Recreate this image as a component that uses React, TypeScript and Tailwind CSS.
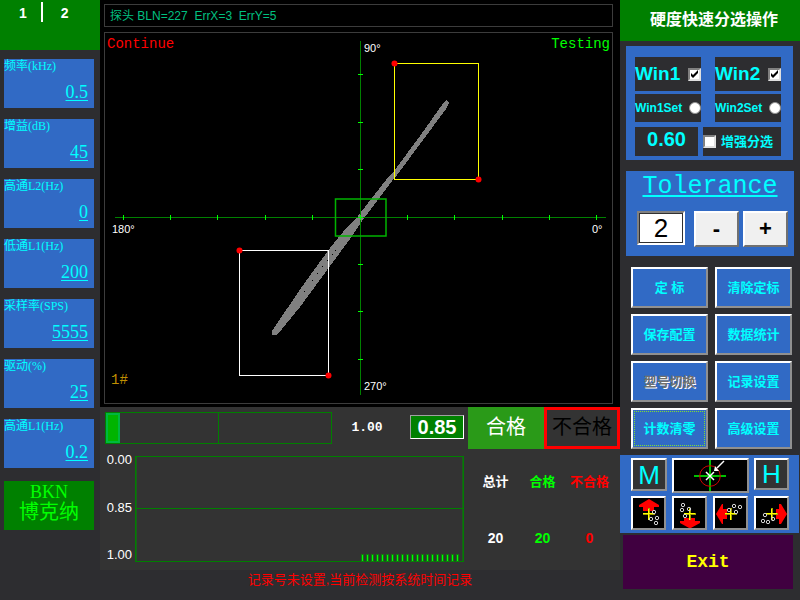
import { useState, type ReactNode } from "react";

const SANS = "font-['Liberation_Sans','Noto_Sans_CJK_SC',sans-serif]";
const SERIF = "font-['Liberation_Serif','Noto_Sans_CJK_SC',serif]";
const MONO = "font-['Liberation_Mono','Noto_Sans_CJK_SC',monospace]";
const BEVEL = "border-2 border-t-white border-l-white border-r-[#909090] border-b-[#909090]";

const parameters = [
  { id: "freq", label: "频率(kHz)", value: "0.5" },
  { id: "gain", label: "增益(dB)", value: "45" },
  { id: "high2", label: "高通L2(Hz)", value: "0" },
  { id: "low1", label: "低通L1(Hz)", value: "200" },
  { id: "rate", label: "采样率(SPS)", value: "5555" },
  { id: "drive", label: "驱动(%)", value: "25" },
  { id: "high1", label: "高通L1(Hz)", value: "0.2" },
];

function Sidebar() {
  return (
    <aside className="w-[100px] shrink-0">
      <nav className="flex h-[50px] items-start gap-[14px] bg-[#008000] pl-[19px] pt-0.5 text-sm font-bold text-white">
        <button className="h-[22px]">1</button>
        <span className="h-5 w-0.5 bg-white" />
        <button className="ml-1 h-[22px]">2</button>
      </nav>
      <div className="flex flex-col gap-[11px] pl-1 pr-1.5 pt-[9px]">
        {parameters.map((p) => (
          <div key={p.id} className={`h-[49px] bg-[#316ac5] text-[#00ffff] ${SERIF}`}>
            <div id={p.id} className="h-[22px] whitespace-nowrap text-xs leading-[14px]">
              {p.label}
            </div>
            <button
              aria-labelledby={p.id}
              className="block w-full pr-1.5 text-right text-lg leading-[22px] underline underline-offset-2"
            >
              {p.value}
            </button>
          </div>
        ))}
      </div>
      <div
        className={`ml-1 mr-1.5 mt-[13px] h-[49px] bg-[#008000] pt-0.5 text-center text-[#00ff00] ${SERIF}`}
      >
        <div className="text-lg leading-[18px]">BKN</div>
        <div className="text-xl leading-[22px]">博克纳</div>
      </div>
    </aside>
  );
}

const xTicks = [123, 170, 217, 265, 312, 360, 407, 454, 502, 549, 596];
const yTicks = [74, 122, 169, 217, 264, 311, 359];
const traceHoles = [
  [335, 250], [332, 254], [327, 260], [322, 266], [317, 273], [312, 280], [304, 291],
];

function ImpedancePlane() {
  return (
    <svg viewBox="105 33 507 370" className="block w-full" shapeRendering="crispEdges">
      <polygon
        fill="#808080"
        points="272,331 301,288 330,248 347,227 358,216 386,180 394,171 420,136 444,102 447,100 449,103 446,109 397,175 392,181 362,221 350,239 330,266 300,307 277,335 272,335"
      />
      {traceHoles.map(([x, y]) => (
        <rect key={x} x={x} y={y} width="1" height="1" fill="#000" />
      ))}
      <rect x="115" y="217" width="491" height="1" fill="#008000" />
      <rect x="360" y="41" width="1" height="354" fill="#008000" />
      {xTicks.map((x) => (
        <rect key={x} x={x} y="215" width="1" height="5" fill="#00ff00" />
      ))}
      {yTicks.map((y) => (
        <rect key={y} x="358" y={y} width="5" height="1" fill="#00ff00" />
      ))}
      <rect x="335.5" y="199" width="50.5" height="37" fill="none" stroke="#00b400" strokeWidth="1.5" shapeRendering="auto" />
      <rect x="394.5" y="63.5" width="84" height="116" fill="none" stroke="#ffff00" />
      <rect x="239.5" y="250.5" width="89" height="125" fill="none" stroke="#fff" />
      <g fill="#f00" shapeRendering="auto">
        <circle cx="394.5" cy="63.5" r="3" />
        <circle cx="478.5" cy="179.5" r="3" />
        <circle cx="239.5" cy="250.5" r="3" />
        <circle cx="328.5" cy="375.5" r="3" />
      </g>
      <g className={`text-[11px] ${SANS}`} fill="#fff">
        <text x="364" y="52">90°</text>
        <text x="112" y="233">180°</text>
        <text x="592" y="233">0°</text>
        <text x="364" y="390">270°</text>
      </g>
      <g className={`text-sm ${MONO}`}>
        <text x="107" y="48" fill="#f00">Continue</text>
        <text x="610" y="48" fill="#00ff00" textAnchor="end">Testing</text>
        <text x="111" y="384" fill="#c09000">1#</text>
      </g>
    </svg>
  );
}

function HistoryChart() {
  return (
    <div className="flex min-w-0 flex-1">
      <div className="-mt-0.5 flex h-[111px] w-[35px] flex-col justify-between pr-[3px] text-right text-[13px] leading-4 text-white">
        <span>0.00</span>
        <span>0.85</span>
        <span>1.00</span>
      </div>
      <svg viewBox="0 0 330 106" className="mt-0.5 block h-[106px] min-w-0 flex-1" shapeRendering="crispEdges">
        <rect x="0.5" y="0.5" width="329" height="105" fill="none" stroke="#008000" />
        <rect x="1" y="1" width="1" height="104" fill="#1a5e1a" />
        <rect x="328" y="1" width="1" height="104" fill="#1a5e1a" />
        <rect x="1" y="52" width="328" height="1" fill="#008000" />
        {Array.from({ length: 20 }, (_, i) => (
          <g key={i}>
            <rect x={227 + i * 5} y="98" width="3" height="8" fill="#107a10" />
            <rect x={228 + i * 5} y="99" width="1" height="6" fill="#00ff00" />
          </g>
        ))}
      </svg>
    </div>
  );
}

function Results() {
  return (
    <section className="h-[163px] bg-[#333333]">
      <div className="flex h-[42px]">
        <div className="ml-[5px] mt-[5px] flex h-8 min-w-0 flex-1 border border-[#008000]">
          <div className="flex-1 border-r border-[#008000]">
            <div className="h-[30px] w-[14px] border-2 border-[#00b840] bg-[#00b400]" />
          </div>
          <div className="flex-1" />
        </div>
        <span className={`w-[70px] pt-0.5 text-center text-[13px] font-bold leading-[38px] text-white ${MONO}`}>
          1.00
        </span>
        <output className="ml-2 mr-1 mt-2 h-6 w-[54px] border border-white border-l-[#a0a0a0] border-t-[#a0a0a0] bg-[#008000] text-center text-xl font-bold leading-[22px] text-white">
          0.85
        </output>
        <div className="w-[76px] bg-[#2a9a18] text-center text-xl leading-10 text-white">合格</div>
        <div className="w-[76px] whitespace-nowrap border-[3px] border-[#ff0000] text-center text-xl leading-[34px] text-black">
          不合格
        </div>
      </div>
      <div className="flex pt-[5px]">
        <HistoryChart />
        <table className="ml-2 mr-[7px] mt-[18px] h-7 w-[141px] table-fixed self-start text-center text-[13px] font-bold leading-5">
          <thead>
            <tr>
              <th className="whitespace-nowrap p-0 text-white">总计</th>
              <th className="whitespace-nowrap p-0 text-[#00ff00]">合格</th>
              <th className="whitespace-nowrap p-0 text-[#ff0000]">不合格</th>
            </tr>
          </thead>
          <tbody className="text-sm leading-5">
            <tr>
              <td className="p-0 pt-9 text-white">20</td>
              <td className="p-0 pt-9 text-[#00ff00]">20</td>
              <td className="p-0 pt-9 text-[#ff0000]">0</td>
            </tr>
          </tbody>
        </table>
      </div>
    </section>
  );
}

function CheckBox({ id, initial = false }: { id: string; initial?: boolean }) {
  const [checked, setChecked] = useState(initial);
  return (
    <span className="relative h-[13px] w-[13px] shrink-0">
      <input
        id={id}
        type="checkbox"
        checked={checked}
        onChange={(e) => setChecked(e.target.checked)}
        className="block h-[13px] w-[13px] appearance-none border-2 border-b-[#e0e0e0] border-l-[#808080] border-r-[#e0e0e0] border-t-[#808080] bg-white"
      />
      {checked && (
        <svg viewBox="0 0 13 13" className="pointer-events-none absolute inset-0 h-[13px] w-[13px]">
          <path d="M3 5v3l2 2 5-5V2L5 7z" fill="#000" />
        </svg>
      )}
    </span>
  );
}

function WindowCells({ n }: { n: number }) {
  return (
    <div className="flex w-[66px] flex-col gap-[3px]">
      <div className="flex h-[34px] items-center justify-between bg-[#2d2d30]">
        <label htmlFor={`win${n}`} className="text-[19px] font-bold leading-8">Win{n}</label>
        <CheckBox id={`win${n}`} initial />
      </div>
      <div className="flex h-7 items-center justify-between bg-[#2d2d30]">
        <label htmlFor={`set${n}`} className="text-xs font-bold">Win{n}Set</label>
        <input
          id={`set${n}`}
          type="radio"
          name="winset"
          className="h-3 w-3 shrink-0 appearance-none rounded-full border border-[#909090] bg-white checked:border-4 checked:border-black"
        />
      </div>
    </div>
  );
}

const actions = [
  { text: "定 标" },
  { text: "清除定标" },
  { text: "保存配置" },
  { text: "数据统计" },
  { text: "型号切换", disabled: true },
  { text: "记录设置" },
  { text: "计数清零", focused: true },
  { text: "高级设置" },
];

function IconButton({ label, children }: { label: string; children: ReactNode }) {
  return (
    <button aria-label={label} className={`h-[34px] w-[35px] bg-black ${BEVEL}`}>
      <svg viewBox="0 0 31 30" className="block h-[30px] w-[31px]">
        {children}
      </svg>
    </button>
  );
}

function Mark({ dots }: { dots: number[][] }) {
  return (
    <>
      <path d="M10 16h12M16 10v12" stroke="#a0a000" strokeWidth="2" />
      <path d="M10 15.500h11M15.500 11v11" stroke="#ffff00" />
      {dots.map(([x, y]) => (
        <circle key={`${x}-${y}`} cx={x} cy={y} r="1.700" fill="none" stroke="#d8d8d8" />
      ))}
    </>
  );
}

function ControlPanel() {
  const [tolerance, setTolerance] = useState(2);
  return (
    <aside className="w-[180px] shrink-0">
      <h1 className="h-[41px] bg-[#008000] pl-2 text-center text-base font-bold leading-10 text-white">
        硬度快速分选操作
      </h1>

      <section className="ml-1.5 mr-[7px] mt-[5px] h-[114px] bg-[#316ac5] pl-[9px] pr-3 pt-[11px] text-[#00ffff]">
        <div className="flex justify-between">
          <WindowCells n={1} />
          <WindowCells n={2} />
        </div>
        <div className="mt-[5px] flex h-[29px] gap-[5px]">
          <output className="w-[63px] bg-[#2d2d30] text-center text-xl font-bold leading-6">0.60</output>
          <div className="flex flex-1 items-center gap-[5px] bg-[#2d2d30]">
            <CheckBox id="enhance" />
            <label htmlFor="enhance" className="whitespace-nowrap text-[13px] font-bold">增强分选</label>
          </div>
        </div>
      </section>

      <section className="ml-1.5 mr-1.5 mt-[11px] h-[85px] bg-[#316ac5]">
        <label
          htmlFor="tolerance"
          className={`block h-10 text-center text-[25px] leading-8 text-[#00ffff] underline underline-offset-2 ${MONO}`}
        >
          Tolerance
        </label>
        <div className="flex pl-[11px]">
          <input
            id="tolerance"
            value={tolerance}
            onChange={(e) => setTolerance(Number(e.target.value) || 0)}
            className="h-[34px] w-12 border-2 border-b-white border-l-[#808080] border-r-white border-t-[#808080] bg-white text-center text-[26px] leading-7 text-black outline-1 -outline-offset-3 outline-[#303030]"
          />
          <button
            onClick={() => setTolerance(tolerance - 1)}
            className="ml-[9px] h-9 w-[45px] border-2 border-b-[#707070] border-l-white border-r-[#707070] border-t-white bg-[#f0f0f0] text-[22px] font-bold leading-8 text-black"
          >
            -
          </button>
          <button
            onClick={() => setTolerance(tolerance + 1)}
            className="ml-1 h-9 w-[45px] border-2 border-b-[#707070] border-l-white border-r-[#707070] border-t-white bg-[#f0f0f0] text-[22px] font-bold leading-8 text-black"
          >
            +
          </button>
        </div>
      </section>

      <section className="ml-[11px] mr-2 mt-[11px] grid grid-cols-2 gap-x-[7px] gap-y-1.5">
        {actions.map((a) => (
          <button
            key={a.text}
            disabled={a.disabled}
            className={`h-[41px] bg-[#316ac5] text-[13px] font-bold text-[#00ffff] disabled:text-[#707070] disabled:[text-shadow:1px_1px_0_#fff] ${BEVEL} ${
              a.focused ? "p-px" : ""
            }`}
          >
            {a.focused ? (
              <span className="flex h-full items-center justify-center border border-dotted border-[#80e030]">
                {a.text}
              </span>
            ) : (
              a.text
            )}
          </button>
        ))}
      </section>

      <section className="mr-px mt-1.5 flex h-[78px] flex-col gap-[3px] bg-[#316ac5] pl-[11px] pr-2.5 pt-[3px]">
        <div className="flex h-[35px] items-start justify-between">
          <button className={`h-[33px] w-9 bg-[#333] text-[26px] leading-7 text-[#00ffff] ${BEVEL}`}>M</button>
          <button aria-label="定位" className={`h-[35px] w-[77px] bg-black ${BEVEL}`}>
            <svg viewBox="0 0 73 31" className="block h-[31px] w-[73px]">
              <path d="M20 16h32M36 0v31" stroke="#00c000" strokeWidth="2" />
              <circle cx="36" cy="16" r="10.3" fill="none" stroke="#d00000" />
              <path d="M32 12l8 8M40 12l-8 8" stroke="#fff" strokeWidth="1.5" />
              <path d="M50 1l-7 7" stroke="#fff" strokeWidth="1.5" />
              <path d="M41 6l4 5-5 0z" fill="#fff" />
            </svg>
          </button>
          <button className={`h-8 w-[35px] bg-[#333] text-[26px] leading-7 text-[#00ffff] ${BEVEL}`}>H</button>
        </div>
        <div className="flex justify-between">
          <IconButton label="上移">
            <path d="M16 1l10 6v2h-5v4H10V9H6V7z" fill="#f00" />
            <Mark dots={[[21, 14], [24, 20], [18, 21], [23, 25]]} />
          </IconButton>
          <IconButton label="下移">
            <path d="M10 20h11v3h5v2l-10 5.500L6 25v-2h4z" fill="#f00" />
            <Mark dots={[[9, 7], [8, 12], [15, 11], [11, 18]]} />
          </IconButton>
          <IconButton label="左移">
            <path d="M1 16L7 6h1v5h4v10H8v5H7z" fill="#f00" />
            <Mark dots={[[14, 12], [19, 8], [25, 9], [21, 14]]} />
          </IconButton>
          <IconButton label="右移">
            <path d="M31 16L25 6h-2v5h-3v10h3v5h2z" fill="#f00" />
            <Mark dots={[[7, 23], [12, 24], [9, 17], [17, 21]]} />
          </IconButton>
        </div>
      </section>

      <button
        className={`ml-[3px] mt-0.5 block h-[54px] w-[170px] bg-[#400040] text-lg font-bold text-[#ffff00] ${MONO}`}
      >
        Exit
      </button>
    </aside>
  );
}

export default function App() {
  return (
    <div className={`flex min-h-screen bg-[#2d2d30] ${SANS}`}>
      <Sidebar />
      <main className="min-w-0 flex-1">
        <section className="bg-black pb-[3px] pl-1 pr-[7px] pt-1">
          <p className="mb-[5px] h-[23px] whitespace-pre border border-[#3c3c3c] pl-[5px] text-xs leading-[23px] text-[#00c080]">
            {"探头 BLN=227  ErrX=3  ErrY=5"}
          </p>
          <div className="border border-[#3c3c3c]">
            <ImpedancePlane />
          </div>
        </section>
        <Results />
        <p className="text-center text-[13px] leading-5 text-[#ff0000]">
          记录号未设置,当前检测按系统时间记录
        </p>
      </main>
      <ControlPanel />
    </div>
  );
}
